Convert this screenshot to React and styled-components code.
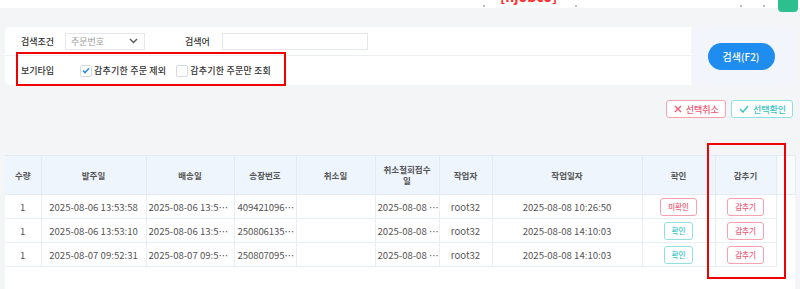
import React from 'react'
import styled, { createGlobalStyle } from 'styled-components'

const GlobalStyle = createGlobalStyle`
  html, body {
    margin: 0;
    padding: 0;
    background: #f4f5f7;
  }
  body {
    font-family: 'Noto Sans CJK KR', 'Noto Sans', sans-serif;
  }
`

const rows = [
    { qty: '1', order: '2025-08-06 13:53:58', ship: '2025-08-06 13:5…', invoice: '409421096…', cancel: '', withdraw: '2025-08-08 …', worker: 'root32', workDate: '2025-08-08 10:26:50', checked: false },
    { qty: '1', order: '2025-08-06 13:53:10', ship: '2025-08-06 13:5…', invoice: '250806135…', cancel: '', withdraw: '2025-08-08 …', worker: 'root32', workDate: '2025-08-08 14:10:03', checked: true },
    { qty: '1', order: '2025-08-07 09:52:31', ship: '2025-08-07 09:5…', invoice: '250807095…', cancel: '', withdraw: '2025-08-08 …', worker: 'root32', workDate: '2025-08-08 14:10:03', checked: true },
]

const columns = [
    { title: '수량', width: 36 },
    { title: '발주일', width: 105 },
    { title: '배송일', width: 88 },
    { title: '송장번호', width: 62 },
    { title: '취소일', width: 79 },
    { title: '취소철회접수일', width: 64 },
    { title: '작업자', width: 53 },
    { title: '작업일자', width: 150 },
    { title: '확인', width: 73 },
    { title: '감추기', width: 61 },
]

export default function App() {
    return (
        <>
            <GlobalStyle />
            <Page>
                <TopBar>
                    <Dot style={{ left: 483 }} />
                    <ClipText>[njobco]</ClipText>
                    <Dot style={{ left: 575 }} />
                    <Dot style={{ left: 740 }} />
                    <Dot style={{ left: 763 }} />
                    <GreenTag />
                </TopBar>

                <Content>
                    <SearchPanel>
                        <SearchFields>
                            <FieldRow>
                                <Label $w={44}>검색조건</Label>
                                <Select>
                                    <span>주문번호</span>
                                    <svg width="9" height="6" viewBox="0 0 9 6">
                                        <path d="M1 1l3.5 3.5L8 1" fill="none" stroke="#555" strokeWidth="1.4" />
                                    </svg>
                                </Select>
                                <Label $w={37} $ml={40}>검색어</Label>
                                <TextInput />
                            </FieldRow>
                            <FieldRow $last>
                                <Label $w={59}>보기타입</Label>
                                <CheckOption>
                                    <Box $checked>
                                        <svg width="8" height="7" viewBox="0 0 8 7">
                                            <path d="M1 3.6l2 2L7 1.2" fill="none" stroke="#2c8ef0" strokeWidth="1.5" />
                                        </svg>
                                    </Box>
                                    감추기한 주문 제외
                                </CheckOption>
                                <CheckOption>
                                    <Box />
                                    감추기한 주문만 조회
                                </CheckOption>
                            </FieldRow>
                        </SearchFields>
                        <SearchAside>
                            <SearchButton>검색(F2)</SearchButton>
                        </SearchAside>
                    </SearchPanel>

                    <ActionBar>
                        <ActionButton $tone="red">
                            <svg width="8" height="8" viewBox="0 0 8 8">
                                <path d="M1 1l6 6M7 1L1 7" stroke="#f05a78" strokeWidth="1.4" />
                            </svg>
                            선택취소
                        </ActionButton>
                        <ActionButton $tone="teal">
                            <svg width="10" height="8" viewBox="0 0 10 8">
                                <path d="M1 4l3 3 5-6" fill="none" stroke="#3cc4c4" strokeWidth="1.5" />
                            </svg>
                            선택확인
                        </ActionButton>
                    </ActionBar>

                    <TableWrap>
                        <Grid>
                            <colgroup>
                                {columns.map((c) => <col key={c.title} style={{ width: c.width }} />)}
                                <col style={{ width: 19 }} />
                            </colgroup>
                            <thead>
                                <tr>
                                    {columns.map((c) => <Th key={c.title}>{c.title}</Th>)}
                                    <Th $gutter />
                                </tr>
                            </thead>
                            <tbody>
                                {rows.map((r, i) => (
                                    <tr key={i}>
                                        <Td>{r.qty}</Td>
                                        <Td>{r.order}</Td>
                                        <Td $left>{r.ship}</Td>
                                        <Td $left $tight>{r.invoice}</Td>
                                        <Td>{r.cancel}</Td>
                                        <Td $left>{r.withdraw}</Td>
                                        <Td>{r.worker}</Td>
                                        <Td>{r.workDate}</Td>
                                        <Td>
                                            <SmallButton $tone={r.checked ? 'teal' : 'red'}>
                                                {r.checked ? '확인' : '미확인'}
                                            </SmallButton>
                                        </Td>
                                        <Td>
                                            <SmallButton $tone="red">감추기</SmallButton>
                                        </Td>
                                        <Td $gutter />
                                    </tr>
                                ))}
                            </tbody>
                        </Grid>
                    </TableWrap>
                </Content>

                <Highlight style={{ left: 16, top: 52, width: 270, height: 34 }} />
                <Highlight style={{ left: 707, top: 143, width: 79, height: 136 }} />
            </Page>
        </>
    )
}

const Page = styled.div`
    position: relative;
    width: 800px;
    height: 289px;
    overflow: hidden;
    background: #f4f5f7;
`

const TopBar = styled.div`
    position: relative;
    height: 8px;
    background: #ffffff;
`

const Dot = styled.span`
    position: absolute;
    top: 5px;
    width: 2px;
    height: 2px;
    background: #b9bcc2;
`

const ClipText = styled.div`
    position: absolute;
    left: 500px;
    top: -12px;
    height: 19px;
    font-size: 14px;
    font-weight: 700;
    color: #ff2a2a;
    line-height: 16px;
    overflow: hidden;
`

const GreenTag = styled.div`
    position: absolute;
    right: 2px;
    top: 0;
    width: 20px;
    height: 12px;
    border-radius: 0 0 4px 4px;
    background: #2dbf8e;
`

const Content = styled.div`
    padding: 19px 5px 0 5px;
`

const SearchPanel = styled.div`
    display: flex;
    height: 58px;
    background: #ffffff;
    border-radius: 5px;
    overflow: hidden;
`

const SearchFields = styled.div`
    flex: 1;
    display: flex;
    flex-direction: column;
`

const FieldRow = styled.div`
    display: flex;
    align-items: center;
    height: 28px;
    padding-left: 16px;
    border-bottom: ${(p) => (p.$last ? 'none' : '1px solid #eceef1')};
    font-size: 9px;
    color: #333;
    flex: ${(p) => (p.$last ? 1 : 'none')};
`

const Label = styled.span`
    width: ${(p) => p.$w}px;
    margin-left: ${(p) => p.$ml || 0}px;
    font-size: 9px;
    font-weight: 500;
    color: #333;
`

const Select = styled.div`
    box-sizing: border-box;
    width: 80px;
    height: 17px;
    border: 1px solid #e4e7eb;
    display: flex;
    align-items: center;
    justify-content: space-between;
    padding: 0 6px 0 5px;
    color: #9a9a9a;
    font-size: 9px;
`

const TextInput = styled.div`
    box-sizing: border-box;
    width: 146px;
    height: 17px;
    border: 1px solid #e4e7eb;
`

const CheckOption = styled.label`
    display: flex;
    align-items: center;
    gap: 2px;
    margin-right: 10px;
    font-size: 9px;
    font-weight: 500;
    color: #333;
    letter-spacing: 0.2px;
`

const Box = styled.span`
    box-sizing: border-box;
    width: 12px;
    height: 12px;
    border: 1px solid #d6d9de;
    border-radius: 2px;
    background: #fff;
    display: flex;
    align-items: center;
    justify-content: center;
`

const SearchAside = styled.div`
    width: 104px;
    background: #f2f6fc;
    display: flex;
    align-items: center;
    justify-content: center;
`

const SearchButton = styled.button`
    width: 67px;
    height: 27px;
    border: none;
    border-radius: 14px;
    background: #1f8cf0;
    color: #fff;
    font-family: 'Noto Sans CJK KR', sans-serif;
    font-size: 10px;
    font-weight: 500;
    padding: 0;
    margin-right: 4px;
`

const ActionBar = styled.div`
    display: flex;
    justify-content: flex-end;
    gap: 5px;
    margin-top: 15px;
    padding-right: 2px;
`

const tones = {
    red: { border: '#f6a0b0', text: '#f05a78' },
    teal: { border: '#8fe0e0', text: '#3cc4c4' },
}

const ActionButton = styled.button`
    box-sizing: border-box;
    display: flex;
    align-items: center;
    gap: 4px;
    height: 18px;
    padding: 0 6px 0 7px;
    background: #fff;
    border: 1.5px solid ${(p) => tones[p.$tone].border};
    border-radius: 3px;
    color: ${(p) => tones[p.$tone].text};
    font-family: 'Noto Sans CJK KR', sans-serif;
    font-size: 9px;
    font-weight: 500;
`

const TableWrap = styled.div`
    margin-top: 37px;
    background: #fff;
    height: 140px;
`

const Grid = styled.table`
    table-layout: fixed;
    border-collapse: collapse;
    width: 790px;
`

const Th = styled.th`
    height: 38px;
    padding: 0 6px;
    background: ${(p) => (p.$gutter ? '#f8fbfe' : '#eef5fd')};
    border: 1px solid #e3ebf5;
    border-left: none;
    font-size: 8.5px;
    font-weight: 700;
    color: #555;
    line-height: 11px;
`

const Td = styled.td`
    height: 23px;
    padding: 0 ${(p) => (p.$tight ? '0 0 3px' : p.$left ? '2px' : '4px')};
    border: ${(p) => (p.$gutter ? 'none' : '1px solid #e8eef5')};
    border-left: none;
    text-align: ${(p) => (p.$left ? 'left' : 'center')};
    font-size: 9.6px;
    letter-spacing: ${(p) => (p.$tight ? '-0.1px' : '0')};
    color: #555;
    white-space: nowrap;
    overflow: hidden;
`

const SmallButton = styled.span`
    box-sizing: border-box;
    display: inline-flex;
    align-items: center;
    justify-content: center;
    height: 18px;
    padding: 0 7px;
    background: #fff;
    border: 1.5px solid ${(p) => tones[p.$tone].border};
    border-radius: 3px;
    color: ${(p) => tones[p.$tone].text};
    font-size: 7.5px;
    font-weight: 500;
`

const Highlight = styled.div`
    position: absolute;
    box-sizing: border-box;
    border: 2px solid #f00000;
    pointer-events: none;
`
